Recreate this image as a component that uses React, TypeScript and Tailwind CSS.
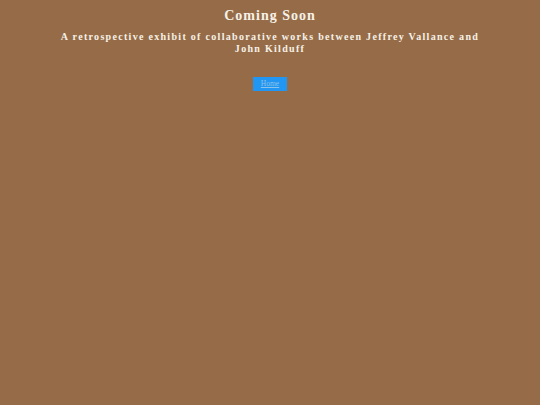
import React from 'react';

export default function App() {
  return (
    <div className="min-h-[405px] w-full bg-[#956c47] font-['Liberation_Serif',serif] text-center">
      <div className="pt-[7px] px-[50px]">
        <h1 className="text-[14px] leading-[18px] font-bold tracking-[1px] text-[#f7f1e8]">Coming Soon</h1>
        <h2 className="mt-[6px] text-[10px] leading-[12px] font-bold tracking-[1.3px] text-[#f7f1e8]">
          A retrospective exhibit of collaborative works between Jeffrey Vallance and John Kilduff
        </h2>
        <div className="mt-[22px] flex justify-center">
          <a href="#" className="block w-[34px] h-[14px] bg-[#2196f3] text-[7.5px] leading-[14px] text-[#8cc3e6] underline">
            Home
          </a>
        </div>
      </div>
    </div>
  );
}
